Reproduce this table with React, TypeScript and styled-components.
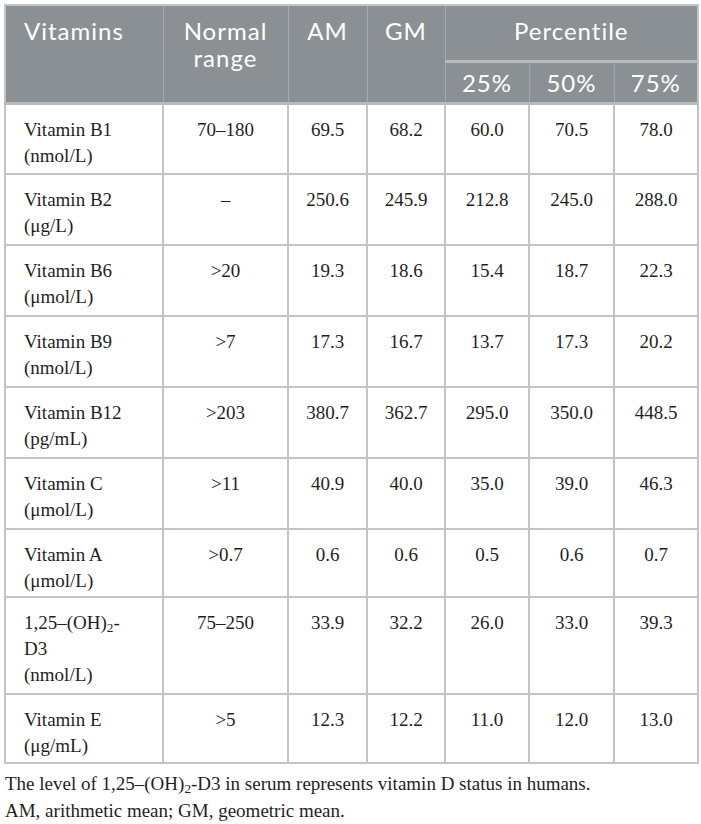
import React from "react";
import styled, { createGlobalStyle } from "styled-components";

const Global = createGlobalStyle`
  html, body { margin: 0; padding: 0; background: #ffffff; }
  body { font-family: "Liberation Serif", "Times New Roman", serif; }
`;

const Page = styled.div`
  padding: 4px 4px 0 4px;
  width: 693px;
`;

const Table = styled.table`
  width: 693px;
  border-collapse: collapse;
  table-layout: fixed;
  border: 2px solid #c3c5c5;
`;

const HeadCell = styled.th<{ $align?: "left" | "center"; $valign?: "top" | "middle" }>`
  background: #8a9093;
  color: #ffffff;
  font-family: Lato, "Open Sans", sans-serif;
  font-weight: 400;
  font-size: 24px;
  letter-spacing: 1px;
  line-height: 27px;
  text-align: ${(p) => p.$align ?? "center"};
  vertical-align: ${(p) => p.$valign ?? "top"};
  padding: ${(p) => (p.$valign === "middle" ? "0 4px" : "11px 4px 0 4px")};
  padding-left: ${(p) => (p.$align === "left" ? "18px" : "4px")};
  border: 1px solid #a4a9ab;
  border-bottom: 3px solid #b6babb;
`;

const SubHeadRow = styled.tr`
  height: 42px;
`;

const TopHeadRow = styled.tr`
  height: 56px;
`;

const Cell = styled.td<{ $label?: boolean }>`
  font-family: "Liberation Serif", "Times New Roman", serif;
  font-size: 19px;
  line-height: 26px;
  color: #1f1f1f;
  text-align: ${(p) => (p.$label ? "left" : "center")};
  vertical-align: top;
  padding: 12px ${(p) => (p.$label ? "6px 2px 18px" : "4px 2px 4px")};
  border: 2px solid #c3c5c5;
`;

const BodyRow = styled.tr<{ $h: number }>`
  height: ${(p) => p.$h}px;
`;

const Footnote = styled.div`
  font-family: "Liberation Serif", "Times New Roman", serif;
  font-size: 19px;
  line-height: 27px;
  color: #1f1f1f;
  padding: 6px 0 0 1px;
`;

const Sub = styled.sub`
  font-size: 0.7em;
  vertical-align: -0.25em;
  line-height: 0;
`;

type Row = { label: React.ReactNode; range: string; v: string[]; h: number };

const Chem = () => (
  <>
    1,25–(OH)<Sub>2</Sub>-
  </>
);

const rows: Row[] = [
  { label: <>Vitamin B1<br />(nmol/L)</>, range: "70–180", v: ["69.5", "68.2", "60.0", "70.5", "78.0"], h: 71 },
  { label: <>Vitamin B2<br />(μg/L)</>, range: "–", v: ["250.6", "245.9", "212.8", "245.0", "288.0"], h: 71 },
  { label: <>Vitamin B6<br />(μmol/L)</>, range: ">20", v: ["19.3", "18.6", "15.4", "18.7", "22.3"], h: 71 },
  { label: <>Vitamin B9<br />(nmol/L)</>, range: ">7", v: ["17.3", "16.7", "13.7", "17.3", "20.2"], h: 71 },
  { label: <>Vitamin B12<br />(pg/mL)</>, range: ">203", v: ["380.7", "362.7", "295.0", "350.0", "448.5"], h: 71 },
  { label: <>Vitamin C<br />(μmol/L)</>, range: ">11", v: ["40.9", "40.0", "35.0", "39.0", "46.3"], h: 71 },
  { label: <>Vitamin A<br />(μmol/L)</>, range: ">0.7", v: ["0.6", "0.6", "0.5", "0.6", "0.7"], h: 68 },
  { label: <><Chem /><br />D3<br />(nmol/L)</>, range: "75–250", v: ["33.9", "32.2", "26.0", "33.0", "39.3"], h: 97 },
  { label: <>Vitamin E<br />(μg/mL)</>, range: ">5", v: ["12.3", "12.2", "11.0", "12.0", "13.0"], h: 69 },
];

const widths = [158, 125, 79, 78, 84, 85, 84];

export default function App() {
  return (
    <Page>
      <Global />
      <Table>
        <colgroup>
          {widths.map((w, i) => (
            <col key={i} style={{ width: w }} />
          ))}
        </colgroup>
        <thead>
          <TopHeadRow>
            <HeadCell rowSpan={2} $align="left">Vitamins</HeadCell>
            <HeadCell rowSpan={2}>Normal<br />range</HeadCell>
            <HeadCell rowSpan={2}>AM</HeadCell>
            <HeadCell rowSpan={2}>GM</HeadCell>
            <HeadCell colSpan={3}>Percentile</HeadCell>
          </TopHeadRow>
          <SubHeadRow>
            <HeadCell $valign="middle">25%</HeadCell>
            <HeadCell $valign="middle">50%</HeadCell>
            <HeadCell $valign="middle">75%</HeadCell>
          </SubHeadRow>
        </thead>
        <tbody>
          {rows.map((r, i) => (
            <BodyRow key={i} $h={r.h}>
              <Cell $label>{r.label}</Cell>
              <Cell>{r.range}</Cell>
              {r.v.map((x, j) => (
                <Cell key={j}>{x}</Cell>
              ))}
            </BodyRow>
          ))}
        </tbody>
      </Table>
      <Footnote>
        The level of 1,25–(OH)<Sub>2</Sub>-D3 in serum represents vitamin D status in humans.
        <br />
        AM, arithmetic mean; GM, geometric mean.
      </Footnote>
    </Page>
  );
}
